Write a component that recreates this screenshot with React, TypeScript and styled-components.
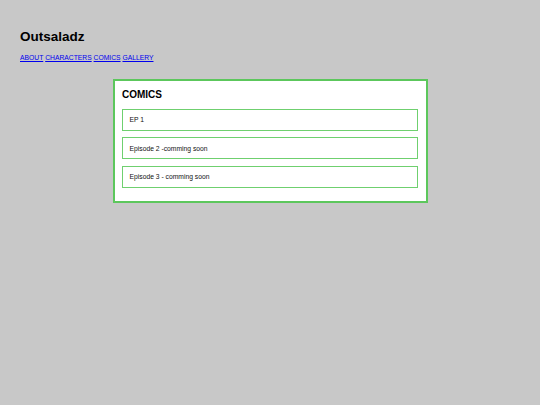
import React from 'react';
import styled, { createGlobalStyle } from 'styled-components';

const GlobalStyle = createGlobalStyle`
  html, body {
    margin: 0;
    padding: 0;
    background-color: #c8c8c8;
    font-family: 'Liberation Sans', Arial, sans-serif;
  }
`;

const Page = styled.div`
  min-height: 405px;
  padding: 29px 20px 0;
  box-sizing: border-box;
`;

const SiteTitle = styled.h1`
  margin: 0;
  font-size: 13.5px;
  line-height: 15.5px;
  font-weight: 700;
  color: #000;
`;

const Nav = styled.nav`
  margin-top: 9px;
  font-size: 6.75px;
  line-height: 8px;
  display: flex;
  gap: 1.9px;
`;

const NavLink = styled.a`
  color: #0000ee;
  text-decoration: underline;
`;

const Panel = styled.section`
  width: 315px;
  box-sizing: border-box;
  margin: 17px auto 0;
  background-color: #fff;
  border: 2px solid #5cc75c;
  padding: 8.5px 7.5px 13.5px;
`;

const PanelTitle = styled.h2`
  margin: 0 0 8px;
  font-size: 10px;
  line-height: 11.5px;
  font-weight: 700;
  color: #000;
`;

const EpisodeList = styled.ul`
  list-style: none;
  margin: 0;
  padding: 0;
  display: flex;
  flex-direction: column;
  gap: 6.5px;
`;

const EpisodeItem = styled.li`
  height: 22px;
  box-sizing: border-box;
  border: 1.5px solid #6fd06f;
  padding: 0 6.5px;
  display: flex;
  align-items: center;
  font-size: 6.75px;
  color: #111;
`;

const links = ['ABOUT', 'CHARACTERS', 'COMICS', 'GALLERY'];
const episodes = ['EP 1', 'Episode 2 -comming soon', 'Episode 3 - comming soon'];

const App = () => {
  return (
    <>
      <GlobalStyle />
      <Page>
        <SiteTitle>Outsaladz</SiteTitle>
        <Nav>
          {links.map((l) => (
            <NavLink key={l} href="#">
              {l}
            </NavLink>
          ))}
        </Nav>
        <Panel>
          <PanelTitle>COMICS</PanelTitle>
          <EpisodeList>
            {episodes.map((e) => (
              <EpisodeItem key={e}>{e}</EpisodeItem>
            ))}
          </EpisodeList>
        </Panel>
      </Page>
    </>
  );
};

export default App;
